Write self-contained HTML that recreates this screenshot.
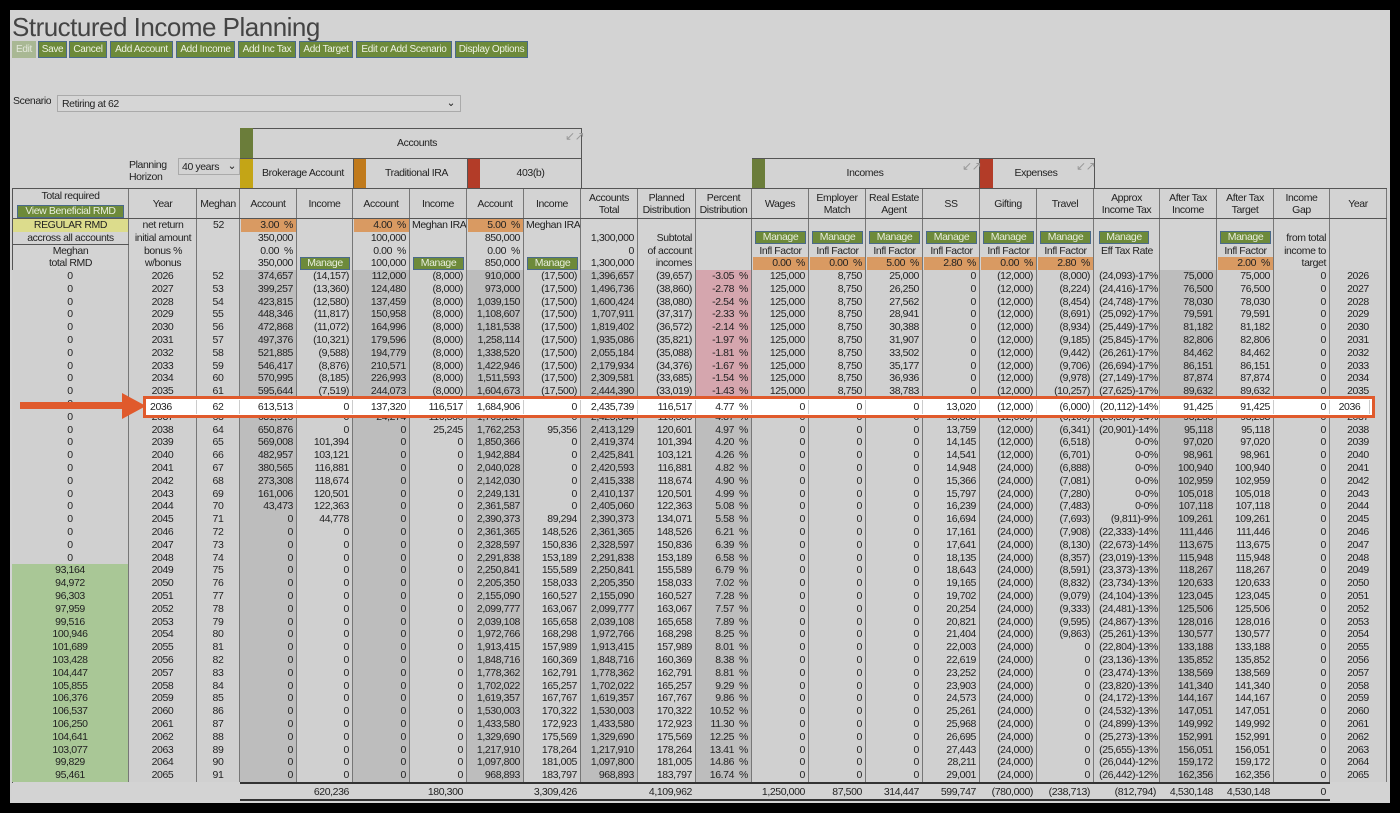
<!DOCTYPE html>
<html><head><meta charset="utf-8">
<style>
*{margin:0;padding:0;box-sizing:border-box}
body{width:1400px;height:813px;background:#000;position:relative;overflow:hidden;font-family:"Liberation Sans",sans-serif;font-size:10.5px;letter-spacing:-0.4px;color:#222}
#pg{position:absolute;left:10px;top:10px;width:1380px;height:793px;background:#d3d3d3}
.a{position:absolute;white-space:nowrap;overflow:hidden;line-height:13px}
.btn{position:absolute;top:41px;height:17px;background:#6d8a3a;border:1px solid #4a6a8a;color:#eef2e4;font-size:10px;line-height:15px;text-align:center;white-space:nowrap;overflow:hidden;letter-spacing:-0.3px}
.c{position:absolute;white-space:nowrap;overflow:hidden;line-height:12.8px;height:12.8px;border-right:1px solid #777;padding:0 3px}
.r{text-align:right}.m{text-align:center}
.mg{position:absolute;background:#6d8a3a;border:1px solid #4a6a8a;color:#e8eedc;text-align:center;line-height:11px;height:13px;font-size:10.5px;white-space:nowrap;overflow:hidden}
.or{background:#d99a62}
</style></head><body>
<div id="pg"></div>
<div class="a" style="left:12px;top:12px;font-size:26px;line-height:30px;color:#444;letter-spacing:-0.5px">Structured Income Planning</div>
<div class="btn" style="left:12px;width:24px;background:#a9b894;border-color:#a9b894;color:#e4e8dc">Edit</div>
<div class="btn" style="left:38px;width:29px">Save</div>
<div class="btn" style="left:69px;width:38px">Cancel</div>
<div class="btn" style="left:110px;width:63px">Add Account</div>
<div class="btn" style="left:176px;width:59px">Add Income</div>
<div class="btn" style="left:238px;width:58px">Add Inc Tax</div>
<div class="btn" style="left:299px;width:54px">Add Target</div>
<div class="btn" style="left:356px;width:96px">Edit or Add Scenario</div>
<div class="btn" style="left:455px;width:73px">Display Options</div>
<div class="a" style="left:13px;top:95px">Scenario</div>
<div class="a" style="left:57px;top:95px;width:404px;height:17px;border:1px solid #aaa;background:#d6d6d6;padding:2px 4px;line-height:12px">Retiring at 62<span style="position:absolute;right:5px;top:1px">&#8964;</span></div>
<div class="a" style="left:129px;top:159px;line-height:12px">Planning<br>Horizon</div>
<div class="a" style="left:178px;top:158px;width:62px;height:17px;border:1px solid #aaa;padding:2px 3px;line-height:12px">40 years<span style="position:absolute;right:3px;top:1px">&#8964;</span></div>
<div class="a" style="left:240px;top:128px;width:342px;height:61px;border:1px solid #555;border-bottom:none"></div>
<div class="a" style="left:240px;top:158px;width:342px;height:1px;background:#555"></div>
<div class="a" style="left:240px;top:128px;width:13px;height:30px;background:#6b7d3a"></div>
<div class="a m" style="left:253px;top:137px;width:328px">Accounts</div>
<div class="a" style="left:240px;top:159px;width:13px;height:29px;background:#c4a516"></div>
<div class="a" style="left:353px;top:159px;width:13px;height:29px;background:#c07a1c"></div>
<div class="a" style="left:467px;top:159px;width:13px;height:29px;background:#b33c28"></div>
<div class="a" style="left:353px;top:159px;width:1px;height:29px;background:#555"></div>
<div class="a" style="left:467px;top:159px;width:1px;height:29px;background:#555"></div>
<div class="a m" style="left:253px;top:167px;width:100px">Brokerage Account</div>
<div class="a m" style="left:366px;top:167px;width:101px">Traditional IRA</div>
<div class="a m" style="left:480px;top:167px;width:101px">403(b)</div>
<div class="a" style="left:565px;top:130px;color:#999;font-size:12px">&#8601;&#8599;</div>
<div class="a" style="left:752px;top:158px;width:343px;height:31px;border:1px solid #555;border-bottom:none"></div>
<div class="a" style="left:752px;top:159px;width:13px;height:30px;background:#6b7d3a"></div>
<div class="a" style="left:980px;top:159px;width:13px;height:30px;background:#b33c28"></div>
<div class="a" style="left:979px;top:159px;width:1px;height:30px;background:#555"></div>
<div class="a m" style="left:765px;top:167px;width:200px">Incomes</div>
<div class="a m" style="left:993px;top:167px;width:86px">Expenses</div>
<div class="a" style="left:962px;top:160px;color:#999;font-size:12px">&#8601;&#8599;</div>
<div class="a" style="left:1076px;top:160px;color:#999;font-size:12px">&#8601;&#8599;</div>
<div id="t"></div>
<script>
var X=[12,129,197,240,297,353,410,467,524,581,638,696,752,809,866,923,980,1037,1094,1160,1217,1274,1330,1387];
var out=[];
function C(i,y,h,txt,cls,st){var x=X[i],w=X[i+1]-x;out.push('<div class="c '+(cls||'')+'" style="left:'+x+'px;top:'+y+'px;width:'+w+'px;height:'+h+'px;'+(st||'')+'">'+txt+'</div>');}
function D(s){out.push(s);}
D('<div class="a" style="left:12px;top:188px;width:1375px;height:1px;background:#555"></div>');
D('<div class="a" style="left:12px;top:188px;width:1px;height:595px;background:#555"></div>');
var H=['','Year','Meghan','Account','Income','Account','Income','Account','Income','Accounts<br>Total','Planned<br>Distribution','Percent<br>Distribution','Wages','Employer<br>Match','Real Estate<br>Agent','SS','Gifting','Travel','Approx<br>Income Tax','After Tax<br>Income','After Tax<br>Target','Income<br>Gap','Year'];
for(var i=0;i<23;i++){var t=H[i],two=t.indexOf('<br>')>0;C(i,189,30,t,'m','line-height:'+(two?'12px;padding-top:3px':'30px')+';padding-left:0;padding-right:0');}
D('<div class="a m" style="left:14px;top:190px;width:113px;line-height:13px">Total required</div>');
D('<div class="mg" style="left:17px;top:205px;width:107px">View Beneficial RMD</div>');
D('<div class="a" style="left:12px;top:218px;width:1375px;height:1px;background:#555"></div>');
var py=219;
for(var i=0;i<23;i++)C(i,py,51,'','','');
function P(i,ln,txt,cls,st){var x=X[i],w=X[i+1]-x;D('<div class="a '+(cls||'')+'" style="left:'+(x+1)+'px;top:'+(py+ln*12.8)+'px;width:'+(w-2)+'px;height:12.8px;line-height:12.8px;padding:0 3px;'+(st||'')+'">'+txt+'</div>');}
P(0,0,'REGULAR RMD','m','background:#dcdc8c');P(0,1,'accross all accounts','m');
D('<div class="a" style="left:12px;top:244px;width:117px;height:1px;background:#555"></div>');
P(0,2,'Meghan','m');P(0,3,'total RMD','m');
P(1,0,'net return','m');P(1,1,'initial amount','m');P(1,2,'bonus %','m');P(1,3,'w/bonus','m');
P(2,0,'52','m');
var acc=[[3,'3.00','350,000'],[5,'4.00','100,000'],[7,'5.00','850,000']];
acc.forEach(function(a){P(a[0],0,a[1]+' &nbsp;%','r or');P(a[0],1,a[2],'r');P(a[0],2,'0.00 &nbsp;%','r');P(a[0],3,a[2],'r');
var x=X[a[0]+1];D('<div class="mg" style="left:'+(x+3)+'px;top:'+(py+38.4)+'px;width:'+(X[a[0]+2]-x-6)+'px">Manage</div>');});
P(6,0,'Meghan IRA','','padding:0 1px');P(8,0,'Meghan IRA','','padding:0 1px');
P(9,1,'1,300,000','r');P(9,2,'0','r');P(9,3,'1,300,000','r');
P(10,1,'Subtotal','r');P(10,2,'of account','r');P(10,3,'incomes','r');
var inf=['0.00','0.00','5.00','2.80','0.00','2.80'];
for(var k=0;k<6;k++){var i=12+k,x=X[i];D('<div class="mg" style="left:'+(x+3)+'px;top:'+(py+12)+'px;width:'+(X[i+1]-x-6)+'px">Manage</div>');P(i,2,'Infl Factor','m');P(i,3,inf[k]+' &nbsp;%','r or');}
D('<div class="mg" style="left:1099px;top:'+(py+12)+'px;width:50px">Manage</div>');P(18,2,'Eff Tax Rate','m');
D('<div class="mg" style="left:1220px;top:'+(py+12)+'px;width:51px">Manage</div>');P(20,2,'Infl Factor','m');P(20,3,'2.00 &nbsp;%','r or');
P(21,1,'from total','r');P(21,2,'income to','r');P(21,3,'target','r');
D('<div class="a" style="left:12px;top:270px;width:1375px;height:1px;background:#555"></div>');
var R=[
['0','374,657','(14,157)','112,000','(8,000)','910,000','(17,500)','1,396,657','(39,657)','-3.05','125,000','8,750','25,000','0','(12,000)','(8,000)','(24,093)-17%','75,000'],
['0','399,257','(13,360)','124,480','(8,000)','973,000','(17,500)','1,496,736','(38,860)','-2.78','125,000','8,750','26,250','0','(12,000)','(8,224)','(24,416)-17%','76,500'],
['0','423,815','(12,580)','137,459','(8,000)','1,039,150','(17,500)','1,600,424','(38,080)','-2.54','125,000','8,750','27,562','0','(12,000)','(8,454)','(24,748)-17%','78,030'],
['0','448,346','(11,817)','150,958','(8,000)','1,108,607','(17,500)','1,707,911','(37,317)','-2.33','125,000','8,750','28,941','0','(12,000)','(8,691)','(25,092)-17%','79,591'],
['0','472,868','(11,072)','164,996','(8,000)','1,181,538','(17,500)','1,819,402','(36,572)','-2.14','125,000','8,750','30,388','0','(12,000)','(8,934)','(25,449)-17%','81,182'],
['0','497,376','(10,321)','179,596','(8,000)','1,258,114','(17,500)','1,935,086','(35,821)','-1.97','125,000','8,750','31,907','0','(12,000)','(9,185)','(25,845)-17%','82,806'],
['0','521,885','(9,588)','194,779','(8,000)','1,338,520','(17,500)','2,055,184','(35,088)','-1.81','125,000','8,750','33,502','0','(12,000)','(9,442)','(26,261)-17%','84,462'],
['0','546,417','(8,876)','210,571','(8,000)','1,422,946','(17,500)','2,179,934','(34,376)','-1.67','125,000','8,750','35,177','0','(12,000)','(9,706)','(26,694)-17%','86,151'],
['0','570,995','(8,185)','226,993','(8,000)','1,511,593','(17,500)','2,309,581','(33,685)','-1.54','125,000','8,750','36,936','0','(12,000)','(9,978)','(27,149)-17%','87,874'],
['0','595,644','(7,519)','244,073','(8,000)','1,604,673','(17,500)','2,444,390','(33,019)','-1.43','125,000','8,750','38,783','0','(12,000)','(10,257)','(27,625)-17%','89,632'],
['0','613,513','0','137,320','116,517','1,684,906','0','2,435,739','116,517','4.77','0','0','0','13,020','(12,000)','(6,000)','(20,112)-14%','91,425'],
['0','631,910','0','24,274','116,536','1,769,152','0','2,425,344','116,536','4.87','0','0','0','13,383','(12,000)','(6,166)','(20,502)-14%','93,253'],
['0','650,876','0','0','25,245','1,762,253','95,356','2,413,129','120,601','4.97','0','0','0','13,759','(12,000)','(6,341)','(20,901)-14%','95,118'],
['0','569,008','101,394','0','0','1,850,366','0','2,419,374','101,394','4.20','0','0','0','14,145','(12,000)','(6,518)','0-0%','97,020'],
['0','482,957','103,121','0','0','1,942,884','0','2,425,841','103,121','4.26','0','0','0','14,541','(12,000)','(6,701)','0-0%','98,961'],
['0','380,565','116,881','0','0','2,040,028','0','2,420,593','116,881','4.82','0','0','0','14,948','(24,000)','(6,888)','0-0%','100,940'],
['0','273,308','118,674','0','0','2,142,030','0','2,415,338','118,674','4.90','0','0','0','15,366','(24,000)','(7,081)','0-0%','102,959'],
['0','161,006','120,501','0','0','2,249,131','0','2,410,137','120,501','4.99','0','0','0','15,797','(24,000)','(7,280)','0-0%','105,018'],
['0','43,473','122,363','0','0','2,361,587','0','2,405,060','122,363','5.08','0','0','0','16,239','(24,000)','(7,483)','0-0%','107,118'],
['0','0','44,778','0','0','2,390,373','89,294','2,390,373','134,071','5.58','0','0','0','16,694','(24,000)','(7,693)','(9,811)-9%','109,261']];
var T=[['0','2,361,365','148,526','6.21','17,161','(7,908)','(22,333)-14%','111,446'],
['0','2,328,597','150,836','6.39','17,641','(8,130)','(22,673)-14%','113,675'],
['0','2,291,838','153,189','6.58','18,135','(8,357)','(23,019)-13%','115,948'],
['93,164','2,250,841','155,589','6.79','18,643','(8,591)','(23,373)-13%','118,267'],
['94,972','2,205,350','158,033','7.02','19,165','(8,832)','(23,734)-13%','120,633'],
['96,303','2,155,090','160,527','7.28','19,702','(9,079)','(24,104)-13%','123,045'],
['97,959','2,099,777','163,067','7.57','20,254','(9,333)','(24,481)-13%','125,506'],
['99,516','2,039,108','165,658','7.89','20,821','(9,595)','(24,867)-13%','128,016'],
['100,946','1,972,766','168,298','8.25','21,404','(9,863)','(25,261)-13%','130,577'],
['101,689','1,913,415','157,989','8.01','22,003','0','(22,804)-13%','133,188'],
['103,428','1,848,716','160,369','8.38','22,619','0','(23,136)-13%','135,852'],
['104,447','1,778,362','162,791','8.81','23,252','0','(23,474)-13%','138,569'],
['105,855','1,702,022','165,257','9.29','23,903','0','(23,820)-13%','141,340'],
['106,376','1,619,357','167,767','9.86','24,573','0','(24,172)-13%','144,167'],
['106,537','1,530,003','170,322','10.52','25,261','0','(24,532)-13%','147,051'],
['106,250','1,433,580','172,923','11.30','25,968','0','(24,899)-13%','149,992'],
['104,641','1,329,690','175,569','12.25','26,695','0','(25,273)-13%','152,991'],
['103,077','1,217,910','178,264','13.41','27,443','0','(25,655)-13%','156,051'],
['99,829','1,097,800','181,005','14.86','28,211','0','(26,044)-12%','159,172'],
['95,461','968,893','183,797','16.74','29,001','0','(26,442)-12%','162,356']];
T.forEach(function(t){R.push([t[0],'0','0','0','0',t[1],t[2],t[1],t[2],t[3],'0','0','0',t[4],'(24,000)',t[5],t[6],t[7]]);});
var dark={3:1,5:1,7:1,9:1,11:1,19:1};
var hl=[];
R.forEach(function(r,k){
 var y=270+k*12.8,yr=2026+k,hi=(k==10);
 var v=[r[0],String(yr),String(52+k)].concat(r.slice(1,9)).concat([r[9]+' &nbsp;%']).concat(r.slice(10,17)).concat([r[17],r[17],'0',String(yr)]);
 for(var i=0;i<23;i++){
  var bg='#d0d0d0';
  if(dark[i])bg='#bdbdbd';
  if(i==0&&k>=23)bg='#a9c796';
  if(i==11&&k<10)bg='#d5a6ae';
  var cls=(i<=2||i==22)?'m':'r';
  var st='background:'+bg+(i==18?';padding:0 1px':'');
  if(hi){hl.push([i,v[i],cls]);}
  C(i,y,12.8,v[i],cls,st);
 }
 if(k%5==4&&k<39)D('<div class="a" style="left:12px;top:'+(y+12.3)+'px;width:1375px;height:1px;background:#666"></div>');
});
D('<div class="a" style="left:240px;top:782px;width:1090px;height:2px;background:#333"></div>');
D('<div class="a" style="left:240px;top:799px;width:1090px;height:2px;background:#333"></div>');
var F={4:'620,236',6:'180,300',8:'3,309,426',10:'4,109,962',12:'1,250,000',13:'87,500',14:'314,447',15:'599,747',16:'(780,000)',17:'(238,713)',18:'(812,794)',19:'4,530,148',20:'4,530,148',21:'0'};
for(var i in F){i=+i;var x=X[i],w=X[i+1]-x;D('<div class="a r" style="left:'+x+'px;top:786px;width:'+w+'px;padding:0 4px">'+F[i]+'</div>');}
D('<div class="a" style="left:143px;top:396px;width:1232px;height:22px;border:3px solid #e05a2c;background:#fff"></div>');
hl.forEach(function(h){var i=h[0];if(i==0)return;var x=Math.max(X[i],147),w=X[i+1]-x;if(i==22)w=1370-x;var al=(i==1)?'':h[2];
D('<div class="a '+al+'" style="left:'+x+'px;top:400px;width:'+w+'px;height:14px;line-height:14px;padding:0 '+(i==18?1:3)+'px;border-right:1px solid #ccc">'+h[1]+'</div>');});
D('<div class="a" style="left:20px;top:402px;width:106px;height:7px;background:#e05a2c"></div>');
D('<svg style="position:absolute;left:122px;top:393px" width="26" height="26"><polygon points="0,0 24,13 0,26" fill="#e05a2c"/></svg>');
document.getElementById('t').innerHTML=out.join('');
</script>
</body></html>
